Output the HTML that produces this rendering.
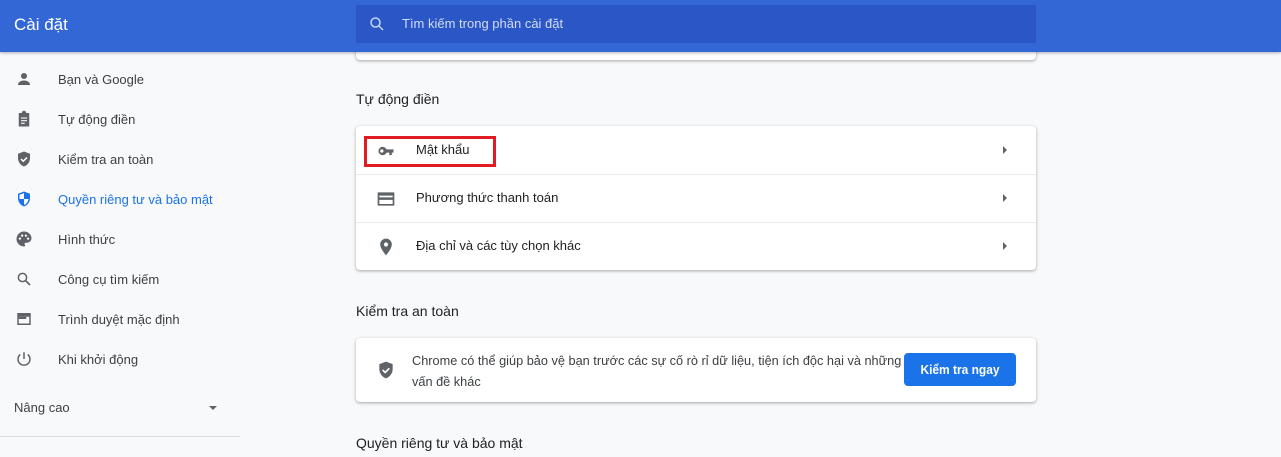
<!DOCTYPE html>
<html><head><meta charset="utf-8"><style>
*{margin:0;padding:0;box-sizing:border-box}
body{width:1281px;height:457px;overflow:hidden;background:#f8f9fa;font-family:"Liberation Sans",sans-serif;color:#202124;position:relative;font-size:13px}
.hdr{position:absolute;left:0;top:0;width:1281px;height:52px;background:#3367d6;box-shadow:0 1px 3px rgba(0,0,0,.3);z-index:2}
.t{position:absolute;white-space:nowrap;transform-origin:left center}
.search{position:absolute;left:356px;top:5px;width:680px;height:38px;background:#2a56c6;border-radius:2px}
.card{position:absolute;background:#fff;border-radius:4px;box-shadow:0 1px 2px rgba(60,64,67,.3),0 1px 3px 1px rgba(60,64,67,.12)}
.nav{position:absolute;left:58px;font-size:13px;color:#3c4043;white-space:nowrap}
.ic{position:absolute}
.arr{position:absolute;left:1003px;width:0;height:0;border-top:4px solid transparent;border-bottom:4px solid transparent;border-left:4px solid #5f6368}
.sep{position:absolute;left:356px;width:680px;height:1px;background:#e8eaed}
</style></head><body>
<div class="hdr">
<div class="t" style="left:14px;top:15px;font-size:17px;color:#fff">Cài đặt</div>
<div class="search">
<svg class="ic" style="left:12px;top:10px" width="18" height="18" viewBox="0 0 24 24"><circle cx="10" cy="10" r="6" fill="none" stroke="#c8d4f0" stroke-width="2"/><path d="M14.5 14.5L20 20" stroke="#c8d4f0" stroke-width="2"/></svg>
<div class="t" style="left:46px;top:11px;font-size:13px;color:#d2dcf5">Tìm kiếm trong phần cài đặt</div>
</div>
</div>

<svg class="ic" style="left:15px;top:70px" width="18" height="18" viewBox="0 0 24 24" fill="#5f6368"><circle cx="12" cy="8" r="4"/><path d="M4 20c0-4 4-6 8-6s8 2 8 6z"/></svg>
<div class="nav" style="top:72px">Bạn và Google</div>
<svg class="ic" style="left:15px;top:110px" width="18" height="18" viewBox="0 0 24 24" fill="#5f6368"><path d="M5 4h4a3 3 0 0 1 6 0h4v18H5zM8 10h8v1.5H8zm0 3.5h8V15H8zm0 3.5h5v1.5H8z" fill-rule="evenodd"/></svg>
<div class="nav" style="top:112px">Tự động điền</div>
<svg class="ic" style="left:15px;top:150px" width="18" height="18" viewBox="0 0 24 24" fill="#5f6368"><path d="M12 2l8 3v6c0 5-3.5 9.5-8 11-4.5-1.5-8-6-8-11V5z"/><path d="M8 12l3 3 5-5" stroke="#fff" stroke-width="2" fill="none"/></svg>
<div class="nav" style="top:152px">Kiểm tra an toàn</div>
<svg class="ic" style="left:15px;top:190px" width="18" height="18" viewBox="0 0 24 24"><path d="M12 2l8 3v6c0 5-3.5 9.5-8 11-4.5-1.5-8-6-8-11V5z" fill="#1a73e8"/><path d="M12 4.2V12H6V6.3zM12 12h6c-.5 3.8-3 7-6 8z" fill="#fff"/></svg>
<div class="nav" style="top:192px;color:#1a73e8">Quyền riêng tư và bảo mật</div>
<svg class="ic" style="left:15px;top:230px" width="18" height="18" viewBox="0 0 24 24" fill="#5f6368"><path d="M12 2a10 10 0 0 0 0 20c1 0 1.5-.7 1.5-1.5 0-.4-.2-.7-.4-1-.2-.3-.4-.6-.4-1 0-.8.7-1.5 1.5-1.5H16a6 6 0 0 0 6-6C22 6 17.5 2 12 2z"/><circle cx="6.5" cy="11.5" r="1.5" fill="#fff"/><circle cx="9.5" cy="7.5" r="1.5" fill="#fff"/><circle cx="14.5" cy="7.5" r="1.5" fill="#fff"/><circle cx="17.5" cy="11.5" r="1.5" fill="#fff"/></svg>
<div class="nav" style="top:232px">Hình thức</div>
<svg class="ic" style="left:15px;top:270px" width="18" height="18" viewBox="0 0 24 24"><circle cx="10" cy="10" r="5.5" fill="none" stroke="#5f6368" stroke-width="2"/><path d="M14 14l6 6" stroke="#5f6368" stroke-width="2.2"/></svg>
<div class="nav" style="top:272px">Công cụ tìm kiếm</div>
<svg class="ic" style="left:15px;top:310px" width="18" height="18" viewBox="0 0 24 24" fill="#5f6368"><path d="M3 4h18v16H3zm2 5v9h14V9z" fill-rule="evenodd"/><path d="M5 9h10v3H5z"/></svg>
<div class="nav" style="top:312px">Trình duyệt mặc định</div>
<svg class="ic" style="left:15px;top:350px" width="18" height="18" viewBox="0 0 24 24" fill="none" stroke="#5f6368" stroke-width="2"><path d="M12 3v9"/><path d="M7 6a8 8 0 1 0 10 0"/></svg>
<div class="nav" style="top:352px">Khi khởi động</div>
<div class="nav" style="left:14px;top:400px">Nâng cao</div>
<div class="ic" style="left:209px;top:406px;border-left:4px solid transparent;border-right:4px solid transparent;border-top:4px solid #5f6368"></div>
<div class="ic" style="left:0;top:436px;width:240px;height:1px;background:#dadce0"></div>

<div class="card" style="left:356px;top:40px;width:680px;height:20px"></div>
<div class="t" style="left:356px;top:91px;font-size:14px">Tự động điền</div>
<div class="card" style="left:356px;top:126px;width:680px;height:144px"></div>
<div class="sep" style="top:174px"></div><div class="sep" style="top:222px"></div>
<svg class="ic" style="left:376px;top:141px" width="20" height="20" viewBox="0 0 24 24" fill="#5f6368"><path d="M12.6 10A5 5 0 1 0 12.6 14H16v3h3v-3h2v-4zM7 14a2 2 0 1 1 0-4 2 2 0 0 1 0 4z"/></svg>
<div class="nav" style="left:416px;top:142px;color:#202124">Mật khẩu</div>
<div class="ic" style="left:364px;top:136px;width:132px;height:31px;border:3px solid #e01b24"></div>
<div class="arr" style="top:146px"></div>
<svg class="ic" style="left:376px;top:189px" width="20" height="20" viewBox="0 0 24 24" fill="#5f6368"><path d="M2 4h20v16H2zm2 4v2h16V8zm0 5v5h16v-5z" fill-rule="evenodd"/></svg>
<div class="nav" style="left:416px;top:190px;color:#202124">Phương thức thanh toán</div>
<div class="arr" style="top:194px"></div>
<svg class="ic" style="left:376px;top:237px" width="20" height="20" viewBox="0 0 24 24" fill="#5f6368"><path d="M12 2a7 7 0 0 0-7 7c0 5 7 13 7 13s7-8 7-13a7 7 0 0 0-7-7zm0 9.5a2.5 2.5 0 1 1 0-5 2.5 2.5 0 0 1 0 5z"/></svg>
<div class="nav" style="left:416px;top:238px;color:#202124">Địa chỉ và các tùy chọn khác</div>
<div class="arr" style="top:242px"></div>

<div class="t" style="left:356px;top:303px;font-size:14px">Kiểm tra an toàn</div>
<div class="card" style="left:356px;top:338px;width:680px;height:64px"></div>
<svg class="ic" style="left:376px;top:360px" width="20" height="20" viewBox="0 0 24 24" fill="#5f6368"><path d="M12 2l8 3v6c0 5-3.5 9.5-8 11-4.5-1.5-8-6-8-11V5z"/><path d="M8 12l3 3 5-5" stroke="#fff" stroke-width="2" fill="none"/></svg>
<div class="nav" style="left:412px;top:350px;color:#3c4043;line-height:21px;transform:scaleX(.98);transform-origin:left">Chrome có thể giúp bảo vệ bạn trước các sự cố rò rỉ dữ liệu, tiện ích độc hại và những<br>vấn đề khác</div>
<div class="ic" style="left:904px;top:353px;width:112px;height:33px;background:#1a73e8;border-radius:4px;color:#fff;font-weight:bold;font-size:13px;text-align:center;line-height:33px"><span style="display:inline-block;transform:scaleX(.92)">Kiểm tra ngay</span></div>
<div class="t" style="left:356px;top:435px;font-size:14px">Quyền riêng tư và bảo mật</div>
</body></html>
